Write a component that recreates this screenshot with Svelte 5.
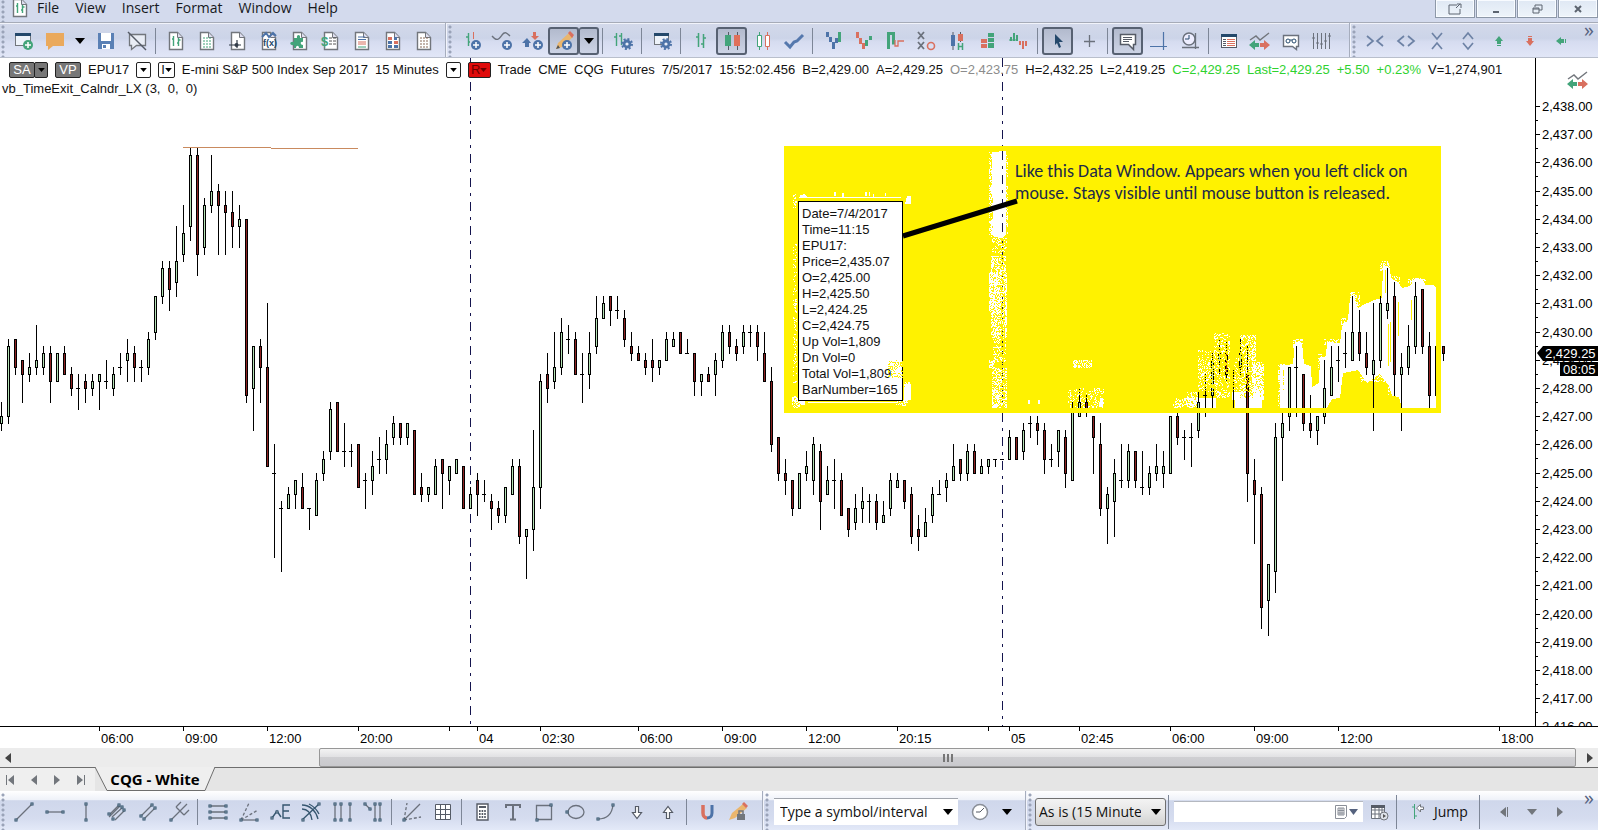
<script>
  // high, body top, body bottom, low (ticks below 2,438.00), direction
  const candleData = `
42 44 45 46 u,33 34 44 45 u,33 33 37 38 d,36 36 38 42 d,35 37 38 39 u,31 36 37 38 u,34 35 37 38 u,34 35 39 42 d,35 35 39 39 u,34 35 38 38 d,
37 38 40 41 d,38 40 40 43 d,38 39 40 42 d,38 39 40 41 u,38 38 39 43 u,36 39 39 40 u,37 38 40 41 u,35 37 37 38 u,33 35 36 39 u,34 35 37 39 d,
36 37 37 39 u,32 33 37 38 u,27 27 32 33 u,22 23 27 28 u,22 23 26 29 d,17 22 25 27 u,14 18 21 22 u,6 7 17 19 u,6 7 21 24 d,13 14 20 21 u,
7 12 14 15 u,11 12 14 21 d,12 14 15 21 d,12 15 17 20 d,14 16 17 20 u,16 16 41 42 d,34 34 40 46 u,33 34 37 42 d,28 37 51 51 d,48 52 52 64 d,
56 57 57 66 d,54 55 57 57 u,53 53 55 57 u,52 54 57 57 d,57 57 57 60 d,52 53 58 58 u,49 50 52 53 u,42 43 49 50 u,42 42 49 49 d,45 49 49 51 d,
48 49 49 51 d,48 48 54 54 d,52 53 53 57 d,49 51 53 55 u,47 50 50 52 u,46 48 50 52 u,44 45 47 48 u,45 45 47 48 d,45 45 47 48 u,46 46 55 55 d,
52 54 55 56 d,54 54 55 56 u,50 51 55 55 u,50 50 52 57 d,51 51 53 55 u,50 50 52 52 u,51 51 57 57 d,54 55 57 57 u,52 53 55 58 d,53 55 55 56 d,
55 56 57 60 d,56 57 58 59 d,54 54 58 59 u,50 51 55 55 u,50 51 61 62 d,60 60 61 67 u,46 54 60 63 u,38 39 54 57 u,35 38 40 42 d,32 37 39 40 u,
30 32 37 38 u,31 33 33 35 d,32 33 38 38 d,35 38 38 42 d,32 35 38 40 u,27 30 34 35 u,27 28 30 30 u,27 27 29 31 d,27 29 29 30 d,29 30 33 34 d,
32 34 35 36 d,34 35 36 36 d,35 36 37 38 d,33 36 37 39 d,36 36 37 38 u,32 33 36 36 u,32 33 34 34 u,32 32 35 35 d,33 35 35 35 d,35 35 39 41 d,
38 38 39 41 u,37 38 39 39 d,35 36 38 41 u,31 32 36 37 u,31 32 34 35 d,33 34 35 36 d,31 32 34 35 u,31 32 32 34 d,31 32 34 36 d,32 35 39 39 d,
37 39 48 49 d,47 47 52 53 d,50 52 53 55 d,53 53 57 58 d,52 52 57 57 u,49 51 52 53 u,47 48 53 55 u,48 49 56 60 d,51 53 55 55 u,50 53 53 57 d,
52 53 58 58 d,57 57 60 61 d,55 57 59 60 u,54 56 57 59 u,55 56 56 59 d,55 56 59 60 d,56 58 59 59 u,52 53 57 58 u,52 53 54 54 u,53 53 56 57 d,
54 55 61 62 d,58 60 61 63 d,57 59 61 61 u,54 55 58 59 u,53 55 55 55 u,52 53 54 56 u,48 51 53 53 u,50 50 52 53 d,48 49 52 53 u,48 49 52 52 d,
50 51 52 52 u,50 50 51 52 u,50 50 50 51 d,50 50 50 50 d,46 47 50 50 u,47 47 50 50 d,45 46 49 50 u,44 45 45 47 u,44 45 46 48 d,45 46 50 52 d,
48 50 50 51 d,46 46 49 51 u,46 47 52 54 d,42 43 53 53 u,40 42 44 44 u,41 42 43 44 d,44 44 47 52 d,45 48 57 58 d,54 55 57 62 u,50 52 56 61 u,
48 53 53 54 u,48 49 53 54 u,49 49 53 54 d,49 54 54 55 d,51 52 54 55 u,48 51 52 53 u,49 51 52 54 u,44 44 52 52 u,43 44 47 48 d,46 47 47 50 d,
45 47 47 51 d,40 42 46 47 u,38 41 41 44 u,35 36 41 43 u,33 35 36 38 u,33 35 38 39 d,37 38 38 43 d,33 35 37 38 u,34 38 52 56 d,50 53 55 62 d,
54 55 71 74 d,65 65 70 75 u,45 47 66 69 u,43 45 47 53 u,37 37 44 46 u,34 37 37 44 d,38 38 45 46 d,41 45 46 47 d,44 44 46 48 u,36 40 44 45 u,
34 37 41 41 u,34 36 36 39 u,32 35 35 37 u,27 32 36 36 u,29 32 35 36 d,32 35 37 38 d,28 36 38 46 u,27 28 36 37 u,23 28 29 30 u,25 27 38 41 d,
35 37 38 46 u,31 34 37 38 u,25 27 34 35 u,26 26 34 35 d,32 34 41 43 d,34 34 41 41 u,34 34 35 36 d`;

  const level = (k) => Math.round(48 + k * 7.05);

  const candles = candleData
    .trim()
    .split(',')
    .map((row, i) => {
      const [h, t, b, l, dir] = row.trim().split(' ');
      return { x: 1 + i * 7, high: level(+h), top: level(+t), bottom: level(+b) + 1, low: level(+l) + 1, dir };
    });

  let seed = 7;
  const rand = () => {
    seed = (seed * 16807) % 2147483647;
    return seed / 2147483647;
  };

  // scattered single pixels inside each box: x, y, width, height, density
  const speckle = (boxes) => {
    let d = '';
    for (const [x, y, w, h, density] of boxes) {
      for (let n = 0; n < w * h * density; n++) {
        d += `M${x + Math.floor(rand() * w)} ${y + Math.floor(rand() * h)}h1v1h-1z`;
      }
    }
    return d;
  };

  const whiteNoise = speckle([
    [989, 94, 3, 85, 0.5], [1005, 96, 3, 80, 0.3], [992, 180, 15, 16, 0.4], [991, 198, 15, 20, 0.8],
    [989, 214, 18, 40, 1.1], [991, 254, 16, 26, 0.9], [993, 280, 13, 24, 0.35], [989, 302, 6, 8, 1],
    [992, 310, 15, 40, 0.8], [793, 136, 4, 14, 0.4], [793, 186, 4, 140, 0.2], [792, 338, 8, 12, 0.8],
    [904, 324, 7, 18, 1.4], [896, 342, 12, 6, 0.6], [1073, 302, 20, 8, 0.7], [1068, 330, 36, 20, 0.3],
    [1198, 292, 20, 42, 0.9], [1214, 275, 16, 20, 0.9], [1216, 290, 14, 50, 0.5], [1234, 330, 30, 12, 0.9],
    [1240, 277, 16, 58, 0.9], [1234, 300, 8, 40, 0.5], [1254, 304, 10, 36, 0.9], [1175, 340, 24, 10, 0.5],
    [1187, 334, 12, 16, 0.6], [1278, 306, 10, 42, 0.7], [1293, 281, 10, 10, 0.6], [1324, 281, 18, 6, 0.4],
    [1341, 260, 10, 10, 0.6], [1350, 234, 10, 14, 0.6], [1380, 203, 10, 10, 0.5], [1392, 218, 8, 8, 0.5],
    [1408, 220, 18, 8, 0.5], [1360, 316, 26, 8, 0.4], [1388, 326, 8, 12, 0.5], [1173, 345, 6, 5, 0.5],
    [1318, 296, 4, 14, 0.5]
  ]);
  const yellowNoise = speckle([
    [1000, 180, 5, 170, 0.5], [1072, 330, 22, 10, 0.6],
    [1198, 272, 36, 62, 0.8], [1234, 272, 18, 62, 0.7]
  ]);
  const windowNoise = speckle([[888, 302, 16, 18, 0.4]]);

  const timeTicks = [
    [99, '06:00'], [183, '09:00'], [267, '12:00'], [358, '20:00'], [449, ''], [477, '04'], [540, '02:30'],
    [638, '06:00'], [722, '09:00'], [806, '12:00'], [897, '20:15'], [988, ''], [1009, '05'], [1079, '02:45'],
    [1170, '06:00'], [1254, '09:00'], [1338, '12:00'], [1499, '18:00']
  ];
  const prices = Array.from({ length: 23 }, (_, i) => 2438 - i);

  const page = '<path d="M5.5 3.5h8l5 5v12h-13z" fill="#fff" stroke="#72767c" stroke-width="1.4"/><path d="M13.5 3.5v5h5" fill="#dde" stroke="#72767c"/>';
  const plus = '<circle cx="17" cy="16" r="5" fill="#4d73a8"/><path d="M14 16h6M17 13v6" stroke="#fff" stroke-width="1.5"/>';
  const gear = '<circle cx="16" cy="15" r="4.4" fill="#4d73a8"/><circle cx="16" cy="15" r="5" stroke="#4d73a8" stroke-width="2" stroke-dasharray="2 1.9"/><circle cx="16" cy="15" r="1.6" fill="#e8edf7"/>';
  const dot = (x, y) => `<rect x="${x - 1}" y="${y - 1}" width="2" height="2" fill="#fff" stroke="#35566f" stroke-width="1.1"/>`;
  const g = 'stroke="#6b717c" stroke-width="1.3"';
  const chartLine = '<path d="M2 11l6-4 4 4 9-7" stroke="#72767c" stroke-width="1.4"/><path d="M1 16l6-5v3h4v4H7v3z" fill="#43a47a"/><path d="M22 16l-6-5v3h-4v4h4v3z" fill="#d9705f"/>';

  const icons = {
    newWindow: '<rect x="3.5" y="4.5" width="15" height="12" fill="#eef3fa" stroke="#72767c"/><path d="M3 4h16v3H3z" fill="#24486b"/><circle cx="16" cy="16" r="5" fill="#43a47a"/><path d="M13 16h6M16 13v6" stroke="#fff" stroke-width="1.5"/>',
    note: '<path d="M3 4h18v13H10l-5 4v-4H3z" fill="#eaa95c"/>',
    save: '<path d="M4 4h16v16H4z" fill="#5a80b5"/><path d="M7 4h10v8H7zM8 15h8v5H8z" fill="#fff"/><path d="M9 16h3v3H9z" fill="#5a80b5"/>',
    noNote: '<path d="M4.5 5.5h16v11h-9l-5 4v-4h-2z" fill="#e9edf5" stroke="#72767c" stroke-width="1.3"/><path d="M3 3l18 18" stroke="#555b66" stroke-width="1.5"/>',
    docBars: page + '<path d="M9.5 7v10M8 10h1.5M14.5 9v8M13 14h1.5M14.5 11h2" stroke="#43a47a" stroke-width="1.4"/>',
    docGrid: page + '<path d="M8 9h8M8 12h8M8 15h8M8 18h8" stroke="#43a47a" stroke-dasharray="2 1" stroke-width="1.2"/>',
    docAxis: page + '<path d="M3 16h12M11 11v8" stroke="#333c48" stroke-width="1.2"/><circle cx="10.5" cy="16" r="2" fill="#333c48"/>',
    docFx: page + '<path d="M5 8l4-4 3 4 4-4 3 3" stroke="#4d73a8" stroke-width="2"/><text x="6" y="17" font-size="9" font-weight="bold" fill="#24486b" font-family="Liberation Sans, sans-serif">f(x)</text>',
    docPuzzle: page + '<path d="M6 9h3c-1-4 4-4 3 0h3v4c-3-1-3 3 0 3v3h-4c0-3-3-3-3 0H6v-3c-5 1-5-4 0-3z" fill="#43a47a"/>',
    docMoney: page + '<path d="M10 9h7M10 12h7M10 15h7" stroke="#555" stroke-dasharray="3 1"/><text x="2" y="17" font-size="13" font-weight="bold" fill="#43a47a" font-family="Liberation Sans, sans-serif">$</text>',
    docLines: page + '<path d="M8 8h7M8 10.5h8" stroke="#4d73a8"/><path d="M8 13h8M8 15h8" stroke="#d9705f"/><path d="M8 18h8" stroke="#43a47a"/>',
    docBlocks: page + '<path d="M7 8h4v3H7zM13 12h4v3h-4z" fill="#d9705f"/><path d="M13 8h3v3h-3zM7 12h4v3H7zM7 16h4v3H7zM13 16h4v3h-4z" fill="#4d73a8"/>',
    docList: page + '<path d="M8 9h8M8 12h8M8 15h8M8 18h8" stroke="#8a6a58" stroke-dasharray="2 1" stroke-width="1.2"/>',
    addBar: '<path d="M9.5 4v13M7 8h2M11 13h-2" stroke="#43a47a" stroke-width="1.4"/><path d="M14.5 3v7" stroke="#d9705f"/>' + plus,
    addCurve: '<path d="M2 7c5 6 7 3 10-1s5-2 8 1" ' + g + '/>' + plus,
    addArrows: '<path d="M12 3h3v4h3l-4 4-4-4h2z" fill="#d9705f"/><path d="M4 18v-4H1l5-5 4 5H8v4z" fill="#4d73a8"/>' + plus,
    pencil: '<path d="M4 20l2-6L17 4l4 4L10 18z" fill="#eab66e"/><path d="M16 4l2-2 4 4-2 3z" fill="#d9705f"/><path d="M4 20l2-4 2 3z" fill="#555"/><circle cx="15" cy="16" r="5" fill="#4d73a8"/><path d="M12 16h6M15 13v6" stroke="#fff" stroke-width="1.5"/>',
    barGear: '<path d="M5.5 4v13M3 8h2M10.5 4v12M8 7h2" stroke="#43a47a" stroke-width="1.4"/>' + gear,
    winGear: '<rect x="4.5" y="4.5" width="14" height="11" fill="#eef3fa" stroke="#72767c"/><path d="M4 4h15v3H4z" fill="#24486b"/>' + gear,
    bars: '<path d="M9.5 4v14M7 8h2M14.5 5v14M12 15h2M15 9h2" stroke="#43a47a" stroke-width="1.5"/>',
    candles: '<path d="M8.5 3v18M17.5 3v18" stroke="#555b66"/><path d="M5 6h6v11H5z" fill="#43a47a"/><path d="M14 6h6v11h-6z" fill="#e0705a"/>',
    hollow: '<path d="M8.5 3v18" stroke="#43a47a"/><path d="M16.5 3v18" stroke="#d9705f"/><path d="M6.5 6.5h4v11h-4z" fill="#fff" stroke="#43a47a"/><path d="M14.5 6.5h4v11h-4z" fill="#fff" stroke="#d9705f"/>',
    line: '<path d="M3 13l5 5 4-5 3-1 6-6" stroke="#5578ad" stroke-width="3"/>',
    steps: '<path d="M5 3h3v5H5zM8 8h3v5H8zM11 13h3v7h-3zM14 9h3v5h-3z" fill="#4d73a8"/><path d="M17 3h3v10h-3z" fill="#43a47a"/>',
    blocksV: '<path d="M4 3h3v6H4zM7 9h3v6H7zM10 14h3v6h-3z" fill="#d9705f"/><path d="M13 11h3v6h-3zM17 7h3v4h-3z" fill="#43a47a"/>',
    kagi: '<path d="M5.500 20V4.500h5v11" stroke="#43a47a" stroke-width="3"/><path d="M12 11v6h3v-5h6" stroke="#d9705f" stroke-width="1.3"/>',
    xo: '<path d="M4 3l6 7M10 3l-6 7M4 13l6 7M10 13l-6 7" stroke="#6b717c" stroke-width="1.8"/><circle cx="17" cy="17" r="3.5" stroke="#d9705f" stroke-width="1.6"/>',
    candleH: '<path d="M8 3v18M15.500 3v10" stroke="#555b66"/><path d="M6 6h4v11H6z" fill="#4d73a8"/><path d="M13 5h5v7h-5z" fill="#d9705f"/><path d="M13.5 14v7M17.5 14v7M13 17.5h4" stroke="#43a47a" stroke-width="1.5"/>',
    brick: '<path d="M5 10h6v4H5zM5 15h6v4H5z" fill="#d9705f"/><path d="M12 4h6v4h-6zM12 9h6v4h-6zM12 14h6v5h-6z" fill="#43a47a"/>',
    histogram: '<path d="M4 8v4M7 4v8M10 6v6" stroke="#43a47a" stroke-width="2"/><path d="M2 11h8" stroke="#43a47a"/><path d="M13 12v4M16 12v8M19 12v5" stroke="#d9705f" stroke-width="2"/>',
    cursor: '<path d="M9 5l8 8h-4l2 5-2 1-2-5-2 2z" fill="#24486b"/>',
    cross: '<path d="M12.5 6v12M7 12.5h11" ' + g + '/>',
    comment: '<path d="M4.5 5.5h15v10h-2v5l-5-5h-8z" fill="#fff" stroke="#555b66" stroke-width="1.5"/><path d="M7 8.5h9M7 10.5h9M7 12.5h6" stroke="#555b66"/>',
    crosshair: '<path d="M3 17.5h17M16.5 3v18" stroke="#4d73a8" stroke-width="1.2"/>',
    clockAxis: '<path d="M4 18.5h17M17.5 4v16" ' + g + '/><circle cx="11" cy="10" r="6" fill="#eef" stroke="#6b717c" stroke-width="1.5"/><path d="M11 6v4h-4" stroke="#24486b"/>',
    table: '<rect x="4.5" y="6.5" width="15" height="12" fill="#fff" stroke="#555b66"/><path d="M4 5h16v3H4z" fill="#24486b"/><path d="M6 10.5h3M6 12.5h3M6 14.5h3M6 16.5h3" stroke="#555b66"/><path d="M10 10.5h8M10 12.5h8M10 14.5h8M10 16.5h8" stroke="#d9705f"/>',
    trend: chartLine,
    glasses: '<path d="M4.5 6.5h15v11h-2v3l-4-3h-9z" fill="#fff" stroke="#6b717c" stroke-width="1.4"/><circle cx="9" cy="12" r="2" stroke="#24486b"/><circle cx="15" cy="12" r="2" stroke="#24486b"/><path d="M11 11h2" stroke="#24486b"/>',
    sliders: '<path d="M3.5 4v16M7.5 4v16M11.5 4v16M15.5 4v16M19.5 4v16M2 9h3M6 14h3M10 15h3M14 12h3M18 7h3" stroke="#6b717c"/>',
    squeezeH: '<path d="M4 7l6 5-6 5M20 7l-6 5 6 5" stroke="#6d82a5" stroke-width="1.7"/>',
    expandH: '<path d="M10 7l-6 5 6 5M14 7l6 5-6 5" stroke="#6d82a5" stroke-width="1.7"/>',
    squeezeV: '<path d="M7 4l5 6 5-6M7 20l5-6 5 6" stroke="#6d82a5" stroke-width="1.7"/>',
    expandV: '<path d="M7 10l5-6 5 6M7 14l5 6 5-6" stroke="#6d82a5" stroke-width="1.7"/>',
    up: '<path d="M12 7l4 5h-2v3h-4v-3H8zM10 16h4v1h-4z" fill="#43a47a"/>',
    down: '<path d="M12 17l-4-5h2V9h4v3h2zM10 7h4v1h-4z" fill="#d9705f"/>',
    left: '<path d="M7 12l5-4v2h3v4h-3v2zM16 10h1v4h-1z" fill="#43a47a"/>',
    segment: `<path d="M4 20L20 4" ${g}/>` + dot(4, 20) + dot(20, 4),
    hLine: `<path d="M4 12h16" ${g}/>` + dot(4, 12) + dot(20, 12),
    vLine: `<path d="M12 4v16" ${g}/>` + dot(12, 4) + dot(12, 20),
    channel4: `<path d="M5 14l9-9M7 17L18 7M10 20l10-10M4 17l11-11" ${g}/>` + dot(14, 5) + dot(19, 10) + dot(4, 14) + dot(8, 19) + dot(17, 7),
    channel: `<path d="M5 16L16 5M8 19L19 8" ${g}/>` + dot(16, 5) + dot(19, 8) + dot(5, 16) + dot(8, 19),
    fork: `<path d="M4 20l9-9M9 7l8 8M9 7l5-5M13 11l7-7M17 15l5-5" ${g}/>` + dot(4, 20),
    levels: `<path d="M4 6h16M4 12h16M4 18h16" ${g}/>` + [6, 12, 18].map((y) => dot(4, y) + dot(20, y)).join(''),
    fan: `<path d="M4 20h16" ${g}/><path d="M4 20l8-17M4 20l17-10" ${g} stroke-dasharray="3 2"/>` + dot(4, 20) + dot(20, 20),
    elliott: '<path d="M4 18l5-7 4 6M22 5h-7v13h7M15 11h6" stroke="#35566f" stroke-width="1.4"/>' + dot(4, 18) + dot(9, 12),
    arcs: '<path d="M3 20L20 4M3 5c8 0 14 6 16 14M3 9c6 0 9 5 10 11M10 4c4 2 8 6 10 10" stroke="#35566f" stroke-width="1.3"/>' + dot(4, 20) + dot(20, 4),
    cycles: `<path d="M5 4v16M11 4v16M20 4v16" ${g}/>` + dot(5, 4) + dot(5, 20) + dot(11, 4) + dot(11, 20) + dot(20, 4) + dot(20, 20),
    cycles2: `<path d="M4 4l6 6M14 4v16M19 4v16" ${g}/>` + dot(4, 4) + dot(9, 9) + dot(14, 4) + dot(14, 20) + dot(19, 4) + dot(19, 20),
    gann: `<path d="M4 20L20 4" ${g}/><path d="M4 20L7 3M4 20l17-3" ${g} stroke-dasharray="3 2"/>` + dot(4, 20),
    grid: '<path d="M4.5 4.5h15v15h-15zM9.5 4v16M14.5 4v16M4 9.5h16M4 14.5h16" fill="#fff" stroke="#555b66"/>',
    calc: '<path d="M7 4h11v16H7z" fill="#fff" stroke="#555b66" stroke-width="1.4"/><path d="M9 6h7v2H9z" fill="#555b66"/><path d="M9 11h7M9 14h7M9 17h7" stroke="#555b66" stroke-width="2" stroke-dasharray="1.6 1"/>',
    text: '<path d="M5 8V5h14v3M12 5v15M9 19.5h6" stroke="#6b717c" stroke-width="2"/>',
    box: `<path d="M4.5 5.5h15v14h-15z" ${g}/>` + dot(19, 5) + dot(5, 20),
    ellipse: `<ellipse cx="13" cy="12" rx="8" ry="6.5" ${g}/>` + dot(4, 12),
    curve: `<path d="M4 19c9 0 14-5 15-14" ${g}/>` + dot(4, 19) + dot(19, 5),
    arrowDown: '<path d="M10.5 6.5h3v6h3l-4.500 6-4.500-6h3z" fill="#fff" stroke="#555b66" stroke-width="1.2"/>',
    arrowUp: '<path d="M10.5 18.5h3v-6h3l-4.500-6-4.500 6h3z" fill="#fff" stroke="#555b66" stroke-width="1.2"/>',
    magnet: '<path d="M8 5v8c0 3 2 5 4 5" stroke="#d9705f" stroke-width="3.5"/><path d="M12 18c3 0 5-2 5-5V5" stroke="#4d73a8" stroke-width="3"/>',
    lockPencil: '<path d="M3 20l3-7L17 4l4 4L9 18z" fill="#eab66e"/><path d="M16 4l2-2 4 4-2 2z" fill="#d9705f"/><path d="M11 14h8v6h-8z" fill="#72767c"/><path d="M13 14v-3h4v3" stroke="#72767c" stroke-width="1.5"/>'
  };

  const group = (s) => s.split(' ');
  const topGroups = [
    group('newWindow note v save noNote | docBars docGrid docAxis docFx docPuzzle docMoney docLines docBlocks docList'),
    group('addBar addCurve addArrows *pencil *v | barGear | winGear | bars *candles hollow line | steps blocksV kagi xo candleH brick histogram | *cursor cross | *comment crosshair clockAxis | table trend glasses sliders'),
    group('squeezeH expandH squeezeV expandV up down left')
  ];
  const drawTools = group('segment hLine vLine channel4 channel fork | levels fan elliott arcs cycles cycles2 | gann grid | calc text box ellipse curve arrowDown arrowUp | magnet lockPencil');

  const quote = ['Trade', 'CME', 'CQG', 'Futures', '7/5/2017', '15:52:02.456', 'B=2,429.00', 'A=2,429.25'];
  const dataWindow = [
    'Date=7/4/2017', 'Time=11:15', 'EPU17:', 'Price=2,435.07', 'O=2,425.00', 'H=2,425.50', 'L=2,424.25',
    'C=2,424.75', 'Up Vol=1,809', 'Dn Vol=0', 'Total Vol=1,809', 'BarNumber=165'
  ];

  let symbol = 'Type a symbol/interval';
  let date = '';
</script>

{#snippet icon(name)}
  <svg class="icon" viewBox="0 0 24 24" fill="none" aria-hidden="true">{@html icons[name]}</svg>
{/snippet}

{#snippet caret()}
  <svg class="caret" viewBox="0 0 10 6" aria-hidden="true"><path d="M0 0h10L5 6z" /></svg>
{/snippet}

{#snippet tools(list)}
  {#each list as item}
    {@const name = item.replace('*', '')}
    {#if name === '|'}
      <span class="sep"></span>
    {:else}
      <button class="tool" class:active={item !== name} class:drop={name === 'v'} aria-label={name === 'v' ? 'More' : name}>
        {#if name === 'v'}{@render caret()}{:else}{@render icon(name)}{/if}
      </button>
    {/if}
  {/each}
{/snippet}

<div class="app">
  <header class="menubar">
    <span class="grip"></span>
    <svg class="icon app-icon" viewBox="0 0 24 24" fill="none" aria-hidden="true">{@html icons.docBars}</svg>
    <nav>
      {#each ['File', 'View', 'Insert', 'Format', 'Window', 'Help'] as item}
        <a href="#{item}">{item}</a>
      {/each}
    </nav>
    <div class="window-buttons">
      <button aria-label="Detach"><svg viewBox="0 0 16 12" fill="none"><path d="M10 2H2v9h11V6M9 5l4-4M10 1h4v4" /></svg></button>
      <button aria-label="Minimize"><svg viewBox="0 0 16 12" fill="none"><path d="M5 9h6" stroke-width="2" /></svg></button>
      <button aria-label="Restore"><svg viewBox="0 0 16 12" fill="none"><path d="M6 4V2h7v5h-3M4 5h6v5H4zM4 6h6" /></svg></button>
      <button aria-label="Close"><svg viewBox="0 0 16 12" fill="none"><path d="M5 3l6 6M11 3l-6 6" stroke-width="2" /></svg></button>
    </div>
  </header>

  <div class="toolbar top">
    {#each topGroups as items}
      <div class="group">
        <span class="grip"></span>
        {@render tools(items)}
      </div>
    {/each}
    <button class="more" aria-label="More tools">»</button>
  </div>

  <main>
    <section class="plot">
      <svg class="canvas" shape-rendering="crispEdges" aria-label="EPU17 candlestick chart">
        <path class="highlight" d="M784 88h657v267h-657z" />
        <path fill="#fff" d="M992 94l14-1v84l-4 3-8-1-3-4 2-6-4-4 4-5-1-12 1-6-2-8-2-4 3-3z" />
        <path fill="#fff" d="M799 138l5-2 3 3h-7zM834 134h2v4h-2zM842 135h2v4h-2zM865 134h2v4h-2zM869 134h1v4h-1zM873 136h1v3h-1zM885 135h1v3h-1zM799 139h102v1h-102zM907 138h4v8h-6zM808 344h90v1h-90zM799 343h6v4h-4zM905 326l6 2v14h-7zM1028 342h2v4h-2zM1038 342h2v4h-2zM1100 340h3v9h-4z" />
        <path fill="#fff" d="M1198 340h18v10h-18zM1235 340h27v10h-27zM1232 334h8v8h-8z" />
        <path
          fill="#fff"
          d="M1280 350V308L1293 306L1295 284L1302 285L1304 306L1311 308L1312 329L1319 325L1320 300L1326 298L1327 284L1340 285L1342 268L1348 262L1350 240L1354 238L1358 250L1365 246L1377 241L1382 240L1383 207L1389 209L1392 222L1398 224L1402 230L1410 228L1415 220L1422 221L1425 227L1433 227L1436 229V350H1402L1399 339L1392 338L1389 328L1380 316L1367 325L1358 312L1343 315L1340 340L1332 341L1327 350z"
        />
        <path class="highlight" d="M1385 211h1v24h-1zM1388 266h1v42h-1zM1390 264h1v40h-1zM1398 244h1v34h-1zM1411 242h1v20h-1zM1283 312h1v24h-1z" />
        <path fill="#fff" d={whiteNoise} />

        <path class="session" d="M470.5 0v668M1002.5 0v88M1002.5 93v90M1002.5 355v313" />
        <path class="session sparse" d="M1002.5 183v165" />
        {#each candles as c}
          <path d="M{c.x} {c.high}h1V{c.low}h-1z" />
          {#if c.bottom - c.top < 2}
            <path d="M{c.x - 2} {c.top}h4v1h-4z" />
          {:else}
            <path d="M{c.x - 1} {c.top}h3V{c.bottom}h-3z" />
            <path class={c.dir === 'u' ? 'rise' : 'fall'} d="M{c.x} {c.top + 1}h1V{c.bottom - 1}h-1z" />
          {/if}
        {/each}
        <path class="highlight" d={yellowNoise} />
        <path class="highlight" d="M784 350h657v5h-657zM1436 88h5v267h-5z" />
        <path class="study-line" d="M183 89.5h88M271 90.5h87" />
      </svg>

      <div class="quote-bar">
        <button class="chip">SA</button><button class="chip chip-drop" aria-label="SA options">{@render caret()}</button>
        <button class="chip vp">VP</button>
        <span>EPU17</span>
        <button class="box" aria-label="Symbol list">{@render caret()}</button>
        <button class="box" aria-label="Interval list">I{@render caret()}</button>
        <span>E-mini S&amp;P 500 Index Sep 2017</span>
        <span>15 Minutes</span>
        <button class="box" aria-label="Interval options">{@render caret()}</button>
        <button class="box red" aria-label="Range">R{@render caret()}</button>
        {#each quote as part}<span>{part}</span>{/each}
        <span class="open">O=2,423.75</span>
        <span>H=2,432.25</span>
        <span>L=2,419.25</span>
        <span class="gain">C=2,429.25</span>
        <span class="gain">Last=2,429.25</span>
        <span class="gain">+5.50</span>
        <span class="gain">+0.23%</span>
        <span>V=1,274,901</span>
      </div>
      <div class="study">vb_TimeExit_Calndr_LX (3,  0,  0)</div>

      <div class="data-window">
        {#each dataWindow as row}<div>{row}</div>{/each}
      </div>
      <p class="annotation">Like this Data Window. Appears when you left click on<br />mouse. Stays visible until mouse button is released.</p>
      <svg class="overlay" aria-hidden="true">
        <path class="leader" d="M903 178L1017 143" />
        <path class="highlight" shape-rendering="crispEdges" d={windowNoise} />
      </svg>
    </section>

    <aside class="price-axis">
      <svg class="canvas">
        {#each prices as price, i}
          {@const y = level(i * 4)}
          <path d="M0 {y}h4v1h-4zM0 {y + 14}h2v1h-2z" />
          <text x="6" y={y + 5}>{price.toLocaleString('en-US')}.00</text>
        {/each}
        <path d="M1 295l6-7h55v15H7zM24 304h38v14H24z" />
        <text class="inverse" x="9" y="300">2,429.25</text>
        <text class="inverse" x="27" y="316">08:05</text>
      </svg>
      <svg class="icon axis-icon" viewBox="0 0 24 24" fill="none" aria-hidden="true">{@html chartLine}</svg>
    </aside>

    <svg class="time-axis">
      {#each timeTicks as [x, label]}
        <path d="M{x} 0h1v4h-1z" />
        <text x={x + 2} y="16">{label}</text>
      {/each}
    </svg>
  </main>

  <div class="scrollbar">
    <button aria-label="Scroll left"><svg viewBox="0 0 6 10"><path d="M6 0v10L0 5z" /></svg></button>
    <div class="track"><div class="thumb"><i></i><i></i><i></i></div></div>
    <button aria-label="Scroll right"><svg viewBox="0 0 6 10"><path d="M0 0v10l6-5z" /></svg></button>
  </div>

  <div class="tabs">
    <div class="pager">
      <button aria-label="First page"><svg viewBox="0 0 8 10"><path d="M0 0h1v10H0zM8 0v10L2 5z" /></svg></button>
      <button aria-label="Previous page"><svg viewBox="0 0 8 10"><path d="M7 0v10L1 5z" /></svg></button>
      <button aria-label="Next page"><svg viewBox="0 0 8 10"><path d="M1 0v10l6-5z" /></svg></button>
      <button aria-label="Last page"><svg viewBox="0 0 8 10"><path d="M7 0h1v10H7zM0 0v10l6-5z" /></svg></button>
    </div>
    <button class="tab">
      <svg viewBox="0 0 120 24" fill="none" aria-hidden="true"><path d="M0 0l12 23.500h98L120 0" fill="#efefef" stroke="#6e6e6e" /></svg>
      <span>CQG - White</span>
    </button>
  </div>

  <footer class="toolbar bottom">
    <div class="group">
      <span class="grip"></span>
      {@render tools(drawTools)}
    </div>
    <div class="group">
      <span class="grip"></span>
      <div class="combo">
        <input aria-label="Symbol or interval" bind:value={symbol} />
        <button aria-label="Symbol history">{@render caret()}</button>
      </div>
      <button class="tool clock" aria-label="Time">
        <svg class="icon" viewBox="0 0 24 24" fill="none"><circle cx="12" cy="12" r="7.5" fill="#fff" stroke="#8a8f98" stroke-width="1.5" /><path d="M8 12h4l4-4" stroke="#555b66" /></svg>
      </button>
      <button class="tool drop" aria-label="Time options">{@render caret()}</button>
    </div>
    <div class="group last">
      <span class="grip"></span>
      <div class="picker">
        <select aria-label="Display interval"><option>As is (15 Minutes)</option></select>
        {@render caret()}
      </div>
      <span class="sep"></span>
      <div class="date">
        <input aria-label="Date" bind:value={date} />
        <button aria-label="Pick a date">
          <svg viewBox="0 0 24 16" fill="none"><path d="M1.5 1.5h11v11l-2 2h-9zM4 4h6v7H4zM6 4v7M8 4v7M4 6.5h6M4 9h6" fill="#fff" stroke="#8a8f98" /><path d="M15 5h9l-4.500 6z" fill="#55627e" /></svg>
        </button>
      </div>
      <button class="tool" aria-label="Calendar">
        <svg class="icon" viewBox="0 0 24 24" fill="none"><path d="M4.5 5.5h13v13h-13zM8 6v12M12 6v12M15 6v12M4 10h13M4 14h13" fill="#fff" stroke="#6b717c" /><path d="M4 5h14v3H4z" fill="#555b66" /><circle cx="17" cy="16" r="4" fill="#dfe3ea" stroke="#72767c" /><path d="M16 14v4l3-2z" fill="#555" /></svg>
      </button>
      <span class="sep"></span>
      <button class="jump">
        <svg class="icon" viewBox="0 0 24 24" fill="none"><path d="M7.5 4v15M5 7h2M8 16h2" stroke="#43a47a" /><path d="M9.5 8l4-3.500V7h3v2.500h-3V12z" fill="#fff" stroke="#72767c" /></svg>
        Jump
      </button>
      <span class="sep"></span>
      <button class="tool nav" aria-label="Back"><svg viewBox="0 0 8 10"><path d="M6 0v10L0 5zM7 0h1v10H7z" /></svg></button>
      <button class="tool nav" aria-label="Jump list">{@render caret()}</button>
      <button class="tool nav" aria-label="Forward"><svg viewBox="0 0 8 10"><path d="M1 0v10l6-5z" /></svg></button>
    </div>
    <button class="more" aria-label="More tools">»</button>
  </footer>
</div>

<style>
  :global(body) {
    margin: 0;
    background: #fff;
  }

  .app {
    display: flex;
    flex-direction: column;
    height: 100vh;
    overflow: hidden;
    color: #111;
    font: 13px/16px 'Liberation Sans', Arial, sans-serif;
  }

  button,
  input,
  select {
    margin: 0;
    padding: 0;
    border: 0;
    background: none;
    font: inherit;
    color: inherit;
  }

  button {
    display: flex;
    align-items: center;
    justify-content: center;
  }

  .icon {
    width: 24px;
    height: 24px;
    flex: none;
  }

  .caret {
    width: 10px;
    height: 6px;
    flex: none;
  }

  .menubar {
    display: flex;
    height: 22px;
    flex: none;
    background: #d3daed;
    border-bottom: 1px solid #a6abb7;
    font: 14px/16px 'Open Sans', 'Noto Sans', sans-serif;
  }

  .app-icon {
    margin: -4px 5px 0 0;
  }

  nav {
    display: flex;
    flex: 1;
    gap: 16px;
  }

  nav a {
    color: #16181c;
    text-decoration: none;
  }

  .window-buttons {
    display: flex;
    gap: 1px;
  }

  .window-buttons button {
    width: 40px;
    height: 18px;
    box-sizing: border-box;
    border: 1px solid #8d98a8;
    border-top: 0;
    background: linear-gradient(#dfe8f4, #eef4fa);
    box-shadow: inset 0 0 0 1px #f8fbff;
  }

  .window-buttons svg {
    width: 16px;
    height: 12px;
    stroke: #5c6470;
  }

  .toolbar {
    display: flex;
    position: relative;
    height: 34px;
    flex: none;
    border-bottom: 1px solid #b9bfcc;
    background: linear-gradient(#d3d9ea, #ccd4e8 45%, #d6dcf0 55%, #e1e6f7);
    box-shadow: inset 0 1px #f1f3fa;
  }

  .group {
    display: flex;
    align-items: center;
    padding-top: 2px;
  }

  .top .group:nth-child(1) {
    padding-right: 6px;
  }

  .top .group:nth-child(2) {
    padding-right: 12px;
  }

  .group + .group {
    box-shadow: inset 1px 0 #a6adbd, inset 2px 0 #f2f4fb;
  }

  .grip {
    width: 8px;
    height: 100%;
    flex: none;
    background: radial-gradient(circle at 3px 2px, #9aa3b8 1px, transparent 2px) 0 0 / 8px 5px;
  }

  .group + .group .grip {
    width: 10px;
    background-position: 2px 0;
  }

  .tool {
    width: 31px;
    height: 28px;
    box-sizing: border-box;
    flex: none;
  }

  .drop {
    width: 20px;
  }

  .active {
    border: 2px solid #576172;
    border-radius: 3px;
    background: linear-gradient(#b2bacd, #ccd3e5);
  }

  .active.drop {
    border-left-width: 1px;
  }

  .sep {
    width: 8px;
    height: 26px;
    flex: none;
    background: linear-gradient(#7d8697, #7d8697) 3px 0 / 1px 100% no-repeat;
  }

  .more {
    position: absolute;
    top: 0;
    right: 4px;
    color: #55627e;
    font: 20px/14px 'Open Sans', sans-serif;
  }

  main {
    display: grid;
    grid-template: minmax(0, 1fr) 21px / minmax(0, 1fr) 63px;
    flex: 1;
    min-height: 0;
    background: #fff;
  }

  .plot,
  .price-axis {
    position: relative;
    overflow: hidden;
    border-bottom: 1px solid #000;
  }

  .price-axis {
    border-left: 1px solid #000;
  }

  .canvas,
  .overlay {
    position: absolute;
    width: 100%;
    height: 100%;
  }

  .axis-icon {
    position: absolute;
    top: 10px;
    right: 8px;
  }

  .time-axis {
    grid-column: 1 / -1;
    width: 100%;
    height: 21px;
  }

  .inverse {
    fill: #fff;
  }

  .highlight {
    fill: #fff200;
  }

  .rise {
    fill: #b4e2b4;
  }

  .fall {
    fill: #8e2222;
  }

  .session {
    stroke: #14144e;
    stroke-dasharray: 9 6 3 6;
  }

  .sparse {
    stroke-dasharray: 3 3 1 4;
  }

  .study-line {
    stroke: #c98a5e;
  }

  .leader {
    stroke: #000;
    stroke-width: 5;
  }

  .quote-bar {
    display: flex;
    position: absolute;
    top: 4px;
    left: 9px;
    gap: 7px;
    align-items: center;
    white-space: nowrap;
  }

  .chip,
  .box {
    height: 16px;
    box-sizing: border-box;
    border: 1px solid #222;
    border-radius: 2px;
  }

  .chip {
    width: 26px;
    background: #777;
    color: #fff;
  }

  .chip-drop {
    width: 14px;
    margin-left: -8px;
    color: #000;
  }

  .box {
    min-width: 15px;
    padding: 0 2px;
    background: #fff;
  }

  .chip .caret,
  .box .caret {
    width: 7px;
    height: 4px;
  }

  .red {
    width: 23px;
    background: #e00b0b;
    color: #6b0000;
  }

  .red .caret {
    fill: #6b0000;
  }

  .open {
    color: #8c8c8c;
  }

  .gain {
    color: #2fd22f;
  }

  .study {
    position: absolute;
    top: 23px;
    left: 2px;
    white-space: pre;
  }

  .data-window {
    position: absolute;
    top: 143px;
    left: 798px;
    width: 100px;
    padding: 4px 0 2px 3px;
    border: 1px solid #000;
    background: #fff;
    white-space: nowrap;
  }

  .annotation {
    position: absolute;
    top: 102px;
    left: 1015px;
    margin: 0;
    color: #20294a;
    font: 18px/22px Carlito, Lato, sans-serif;
    white-space: nowrap;
  }

  .scrollbar {
    display: flex;
    height: 19px;
    flex: none;
    background: #ececec;
  }

  .scrollbar button {
    width: 16px;
  }

  .scrollbar button svg {
    width: 6px;
    height: 10px;
    fill: #444;
  }

  .track {
    display: flex;
    flex: 1;
    padding: 0 6px 0 303px;
  }

  .thumb {
    display: flex;
    flex: 1;
    height: 17px;
    gap: 2px;
    align-items: center;
    justify-content: center;
    border: 1px solid #979797;
    border-radius: 2px;
    background: linear-gradient(#f3f3f3, #e2e2e4 45%, #cfcfd2 50%, #c9c9cd);
  }

  .thumb i {
    width: 2px;
    height: 8px;
    background: #777;
  }

  .tabs {
    display: flex;
    height: 23px;
    flex: none;
    border-top: 1px solid #6e6e6e;
    background: #e5e5e5;
  }

  .pager {
    display: flex;
    width: 95px;
    background: #efefef;
  }

  .pager button {
    width: 24px;
    padding-right: 4px;
  }

  .pager svg,
  .nav svg {
    width: 8px;
    height: 10px;
    fill: #72767c;
  }

  .tab {
    position: relative;
    width: 120px;
    margin-top: -1px;
    font: bold 15px/20px 'Open Sans', 'Noto Sans', sans-serif;
  }

  .tab svg {
    position: absolute;
    inset: 0;
    width: 120px;
    height: 24px;
  }

  .tab span {
    position: relative;
    color: #000;
    white-space: nowrap;
  }

  .bottom {
    height: 39px;
    border: 0;
    background: linear-gradient(#fff, #eff2f9 22%, #cfd7eb 25%, #d5dcef 70%, #e3e9f8);
    box-shadow: none;
    font: 14px/18px 'Open Sans', 'Noto Sans', sans-serif;
  }

  .bottom .group:nth-child(1) {
    padding-right: 9px;
  }

  .combo {
    display: flex;
    width: 184px;
    height: 27px;
    margin-left: 2px;
    border-top: 1px solid #a0a4ac;
    box-sizing: border-box;
    background: #fff;
  }

  .combo input {
    flex: 1;
    min-width: 0;
    padding-left: 6px;
  }

  .combo button {
    width: 20px;
  }

  .clock {
    margin-left: 6px;
  }

  .clock + .drop {
    width: 24px;
    margin-right: 6px;
  }

  .picker {
    position: relative;
    display: flex;
    align-items: center;
  }

  .picker select {
    width: 131px;
    height: 28px;
    padding: 0 24px 0 3px;
    border: 1px solid #707070;
    border-radius: 3px;
    appearance: none;
    background: linear-gradient(#f3f3f3, #e6e6e6 50%, #d2d2d2);
    text-overflow: clip;
  }

  .picker .caret {
    position: absolute;
    right: 5px;
  }

  .last .sep {
    height: 34px;
    background-position: 2px 0;
  }

  .date {
    display: flex;
    width: 189px;
    height: 20px;
    border-top: 1px solid #b4b8c0;
    background: #fff;
  }

  .date input {
    flex: 1;
    min-width: 0;
  }

  .date button {
    width: 34px;
  }

  .date svg {
    width: 24px;
    height: 16px;
  }

  .jump {
    gap: 3px;
    width: 75px;
    padding-left: 5px;
    justify-content: flex-start;
    white-space: nowrap;
  }

  .nav {
    width: 28px;
  }

  .nav .caret {
    width: 10px;
    height: 6px;
  }

  .last .sep + .nav {
    margin-left: 5px;
  }
</style>
